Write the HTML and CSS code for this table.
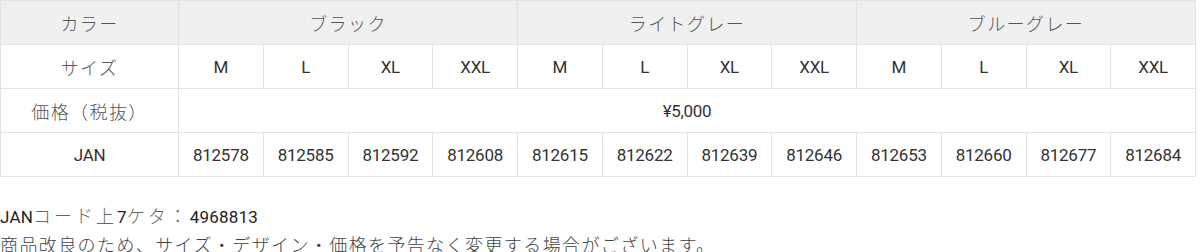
FILE: index.html
```html
<!DOCTYPE html>
<html lang="ja">
<head>
<meta charset="utf-8">
<link rel="stylesheet" href="styles.css">
</head>
<body>
<div class="page">
  <table class="spec">
    <colgroup>
      <col class="col-head">
      <col span="12">
    </colgroup>
    <tr class="row-color">
      <th class="jp">カラー</th>
      <th class="jp" colspan="4">ブラック</th>
      <th class="jp" colspan="4">ライトグレー</th>
      <th class="jp" colspan="4">ブルーグレー</th>
    </tr>
    <tr>
      <th class="jp">サイズ</th>
      <td>M</td><td>L</td><td>XL</td><td>XXL</td>
      <td>M</td><td>L</td><td>XL</td><td>XXL</td>
      <td>M</td><td>L</td><td>XL</td><td>XXL</td>
    </tr>
    <tr>
      <th class="jp">価格（税抜）</th>
      <td colspan="12">¥5,000</td>
    </tr>
    <tr>
      <th>JAN</th>
      <td>812578</td><td>812585</td><td>812592</td><td>812608</td>
      <td>812615</td><td>812622</td><td>812639</td><td>812646</td>
      <td>812653</td><td>812660</td><td>812677</td><td>812684</td>
    </tr>
  </table>
  <div class="notes">
    <p class="note note-code">JAN<span class="jp">コード上</span>7<span class="jp">ケタ：</span>4968813</p>
    <p class="note jp">商品改良のため、サイズ・デザイン・価格を予告なく変更する場合がございます。</p>
  </div>
</div>
</body>
</html>
```
FILE: styles.css
```css
html, body {
  margin: 0;
  padding: 0;
  background: #ffffff;
}
body {
  font-family: Roboto, "Noto Sans CJK JP", sans-serif;
  color: #333333;
  font-size: 17px;
}
.page {
  width: 1196px;
}
.spec {
  width: 1196px;
  border-collapse: collapse;
  table-layout: fixed;
}
.col-head {
  width: 178px;
}
.spec th, .spec td {
  border: 1px solid #e3e3e3;
  height: 43px;
  padding: 0;
  text-align: center;
  vertical-align: middle;
  font-weight: 400;
  font-size: 17px;
  letter-spacing: -0.3px;
  color: #333333;
}
.row-color th {
  background: #f0f0f0;
}
.jp {
  font-family: "Noto Sans CJK JP", sans-serif;
  font-weight: 300;
  font-size: 18px;
  letter-spacing: 1.4px;
  color: #555555;
}
.spec th.jp {
  font-size: 18px;
  letter-spacing: 1.4px;
  color: #555555;
  font-weight: 300;
}
.notes {
  padding-top: 25px;
}
.note {
  margin: 0;
  line-height: 27px;
  font-size: 17px;
  color: #333333;
  white-space: nowrap;
}
.note-code {
  font-weight: 400;
  letter-spacing: 0.2px;
  color: #222222;
}
.note-code .jp {
  font-size: 18px;
  font-weight: 300;
  letter-spacing: 3px;
  color: #666666;
}
.note.jp {
  font-size: 18px;
  letter-spacing: 1.4px;
  color: #444444;
}
```
